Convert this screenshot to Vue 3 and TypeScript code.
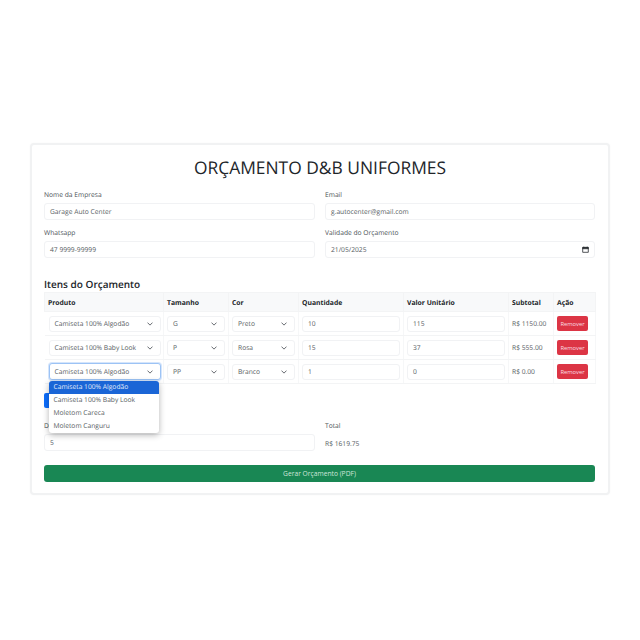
<template>
  <div class="page">
    <div class="card">
      <h1>ORÇAMENTO D&amp;B UNIFORMES</h1>

      <div class="form-grid">
        <div class="field" v-for="f in fields" :key="f.label">
          <label>{{ f.label }}</label>
          <div class="control date-control">
            <span>{{ f.value }}</span>
            <svg v-if="f.date" class="cal" viewBox="0 0 10 10" width="7" height="7">
              <path d="M1 2h8v7H1z" fill="none" stroke="#212529" stroke-width="1.1" />
              <path d="M1 2h8v2H1zM2.5 .8v1.5M7.5 .8v1.5" fill="#212529" stroke="#212529" stroke-width=".8" />
            </svg>
          </div>
        </div>
      </div>

      <h2>Itens do Orçamento</h2>
      <table>
        <colgroup>
          <col style="width: 119px" />
          <col style="width: 65px" />
          <col style="width: 70px" />
          <col style="width: 105px" />
          <col style="width: 105px" />
          <col style="width: 45px" />
          <col style="width: 42px" />
        </colgroup>
        <thead>
          <tr>
            <th v-for="h in headers" :key="h">{{ h }}</th>
          </tr>
        </thead>
        <tbody>
          <tr v-for="(item, i) in items" :key="i">
            <td class="product-cell">
              <div class="control select" :class="{ focused: i === 2 }">
                <span>{{ item.produto }}</span>
                <svg class="chev" viewBox="0 0 16 16" width="6" height="6"><path d="m2 5 6 6 6-6" fill="none" stroke="#343a40" stroke-width="2" stroke-linecap="round" stroke-linejoin="round" /></svg>
              </div>
              <ul v-if="i === 2" class="menu">
                <li v-for="(p, n) in produtos" :key="p" :class="{ active: n === 0 }">{{ p }}</li>
              </ul>
            </td>
            <td>
              <div class="control select">
                <span>{{ item.tamanho }}</span>
                <svg class="chev" viewBox="0 0 16 16" width="6" height="6"><path d="m2 5 6 6 6-6" fill="none" stroke="#343a40" stroke-width="2" stroke-linecap="round" stroke-linejoin="round" /></svg>
              </div>
            </td>
            <td>
              <div class="control select">
                <span>{{ item.cor }}</span>
                <svg class="chev" viewBox="0 0 16 16" width="6" height="6"><path d="m2 5 6 6 6-6" fill="none" stroke="#343a40" stroke-width="2" stroke-linecap="round" stroke-linejoin="round" /></svg>
              </div>
            </td>
            <td><div class="control">{{ item.qtd }}</div></td>
            <td><div class="control">{{ item.valor }}</div></td>
            <td class="subtotal">{{ item.subtotal }}</td>
            <td><button class="btn-remove">Remover</button></td>
          </tr>
        </tbody>
      </table>

      <button class="btn-add">Adicionar Item</button>

      <div class="form-grid totals">
        <div class="field">
          <label>Desconto (%)</label>
          <div class="control">5</div>
        </div>
        <div class="field">
          <label>Total</label>
          <div class="total-value">R$ 1619.75</div>
        </div>
      </div>

      <button class="btn-generate">Gerar Orçamento (PDF)</button>
    </div>
  </div>
</template>

<script setup lang="ts">
const fields = [
  { label: 'Nome da Empresa', value: 'Garage Auto Center' },
  { label: 'Email', value: 'g.autocenter@gmail.com' },
  { label: 'Whatsapp', value: '47 9999-99999' },
  { label: 'Validade do Orçamento', value: '21/05/2025', date: true }
]

const headers = ['Produto', 'Tamanho', 'Cor', 'Quantidade', 'Valor Unitário', 'Subtotal', 'Ação']

const produtos = ['Camiseta 100% Algodão', 'Camiseta 100% Baby Look', 'Moletom Careca', 'Moletom Canguru']

const items = [
  { produto: produtos[0], tamanho: 'G', cor: 'Preto', qtd: '10', valor: '115', subtotal: 'R$ 1150.00' },
  { produto: produtos[1], tamanho: 'P', cor: 'Rosa', qtd: '15', valor: '37', subtotal: 'R$ 555.00' },
  { produto: produtos[0], tamanho: 'PP', cor: 'Branco', qtd: '1', valor: '0', subtotal: 'R$ 0.00' }
]
</script>

<style>
body {
  background: #fff;
}
</style>

<style scoped>
.page {
  height: 640px;
  box-sizing: border-box;
  padding: 143px 30px 0;
  font-family: "Open Sans", "Noto Sans", sans-serif;
  font-size: 6.7px;
  text-rendering: geometricPrecision;
  color: #3c4248;
}
.card {
  box-sizing: border-box;
  width: 580px;
  height: 352px;
  padding: 0 13px;
  background: #fff;
  border: 2px solid #f1f2f3;
  border-radius: 4px;
  box-shadow: 0 0 2px rgba(0, 0, 0, 0.04);
}
h1 {
  margin: 11px 0 10px;
  font-size: 17.4px;
  line-height: 24px;
  font-weight: 500;
  text-align: center;
  color: #212529;
}
.form-grid {
  display: grid;
  grid-template-columns: 271px 270px;
  column-gap: 10px;
  row-gap: 8px;
  margin-left: -1px;
}
.field label {
  display: block;
  height: 9px;
  line-height: 9px;
  margin-bottom: 4px;
  color: #4a5056;
}
.control {
  display: flex;
  align-items: center;
  justify-content: space-between;
  box-sizing: border-box;
  height: 17px;
  padding: 0 5px;
  background: #fff;
  border: 1px solid #f1f2f4;
  border-radius: 3px;
  color: #555b61;
  white-space: nowrap;
}
h2 {
  margin: 19px 0 1px -1px;
  font-size: 10px;
  line-height: 14px;
  font-weight: 600;
  color: #212529;
}
table {
  width: 551px;
  margin-left: -1px;
  table-layout: fixed;
  border-collapse: collapse;
}
th {
  height: 18px;
  padding: 0 3px;
  background: #f8f9fa;
  border: 1px solid #f3f4f5;
  text-align: left;
  font-size: 6.8px;
  font-weight: 700;
  color: #212529;
  white-space: nowrap;
}
td {
  box-sizing: border-box;
  height: 24px;
  padding: 0 3px;
  border: 1px solid #f3f4f5;
  border-left: 0;
  border-right: 1px solid #f6f7f8;
}
td .control {
  height: 16px;
}
td .select {
  padding-right: 7px;
}
.product-cell {
  position: relative;
  padding: 0 2px 0 4px;
}
.control.focused {
  height: 17px;
  border-color: #9cc3f5;
  box-shadow: 0 0 0 1px #d5e5fb;
}
.chev {
  flex: none;
}
.subtotal {
  padding: 0 0 0 3px;
  white-space: nowrap;
  color: #555b61;
}
.btn-remove {
  display: block;
  width: 31px;
  height: 15px;
  padding: 0;
  border: 0;
  border-radius: 2px;
  background: #dc3545;
  color: #fbdfe2;
  font: inherit;
  font-size: 5.8px;
}
.menu {
  position: absolute;
  top: 21px;
  left: 4px;
  z-index: 2;
  width: 110px;
  margin: 0;
  padding: 0;
  list-style: none;
  background: #fff;
  border-radius: 3px;
  overflow: hidden;
  box-shadow: 0 2px 6px rgba(0, 0, 0, 0.3);
  color: #555b61;
}
.menu li {
  height: 12.9px;
  line-height: 12.9px;
  padding-left: 5px;
  white-space: nowrap;
}
.menu li.active {
  background: #1a65d6;
  color: #e4edfb;
}
.btn-add {
  display: block;
  width: 56px;
  height: 15px;
  margin: 9px 0 0 -1px;
  padding: 0;
  border: 0;
  border-radius: 2px;
  background: #0d6efd;
  color: #fff;
  font: inherit;
}
.totals {
  margin-top: 13px;
}
.total-value {
  height: 19px;
  line-height: 19px;
  color: #555b61;
}
.btn-generate {
  display: block;
  width: 551px;
  height: 17px;
  margin: 12px 0 0 -1px;
  padding: 0;
  border: 0;
  border-radius: 3px;
  background: #198754;
  color: #cfe6da;
  font: inherit;
}
</style>
